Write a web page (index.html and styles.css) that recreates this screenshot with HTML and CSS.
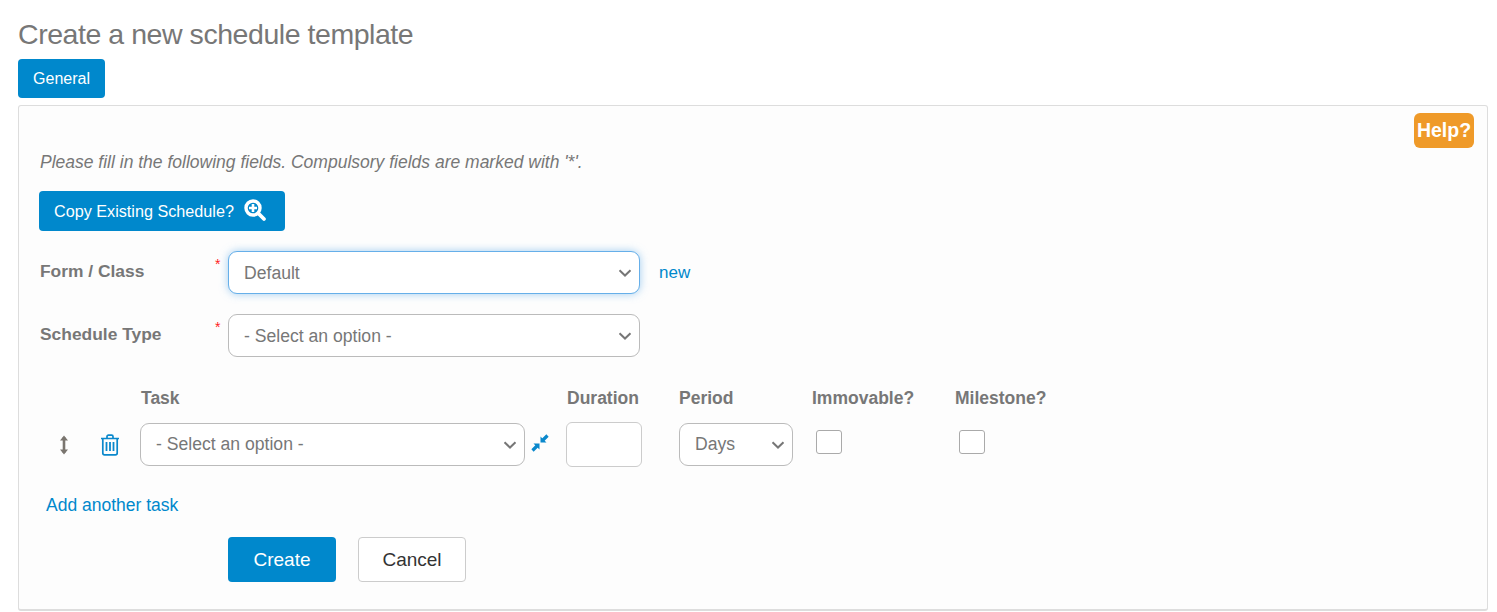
FILE: index.html
```html
<!DOCTYPE html>
<html lang="en">
<head>
<meta charset="utf-8">
<title>Create a new schedule template</title>
<link rel="stylesheet" href="styles.css">
</head>
<body>
<h1 class="title">Create a new schedule template</h1>
<div class="tabs"><a class="tab">General</a></div>
<main class="panel">
  <div class="help-row"><a class="help">Help?</a></div>
  <p class="intro">Please fill in the following fields. Compulsory fields are marked with '*'.</p>
  <button class="btn copy" type="button">Copy Existing Schedule?
    <svg class="copy-icon" viewBox="0 0 24 24" width="24" height="24" aria-hidden="true">
      <circle cx="10" cy="10" r="7" fill="none" stroke="#fff" stroke-width="3.400"/>
      <path d="M15.500 15.500L21 21" stroke="#fff" stroke-width="3.800" stroke-linecap="round"/>
      <path d="M10 6v8M6 10h8" stroke="#fff" stroke-width="2.600"/>
    </svg>
  </button>
  <div class="form-row first">
    <label class="form-label">Form / Class</label>
    <span class="req">*</span>
    <select class="select wide focus"><option>Default</option></select>
    <a class="link new">new</a>
  </div>
  <div class="form-row second">
    <label class="form-label">Schedule Type</label>
    <span class="req">*</span>
    <select class="select wide"><option>- Select an option -</option></select>
  </div>
  <div class="task-grid">
    <span></span>
    <span class="th">Task</span>
    <span></span>
    <span class="th">Duration</span>
    <span class="th">Period</span>
    <span class="th">Immovable?</span>
    <span class="th">Milestone?</span>
    <div class="row-tools">
      <svg class="move" viewBox="0 0 10 24" width="10" height="24" aria-hidden="true">
        <path d="M5 4v16" stroke="#7a756f" stroke-width="2.600"/>
        <path d="M1 7.500L5 2.500L9 7.500ZM1 16.500L5 21.500L9 16.500Z" fill="#7a756f"/>
      </svg>
      <svg class="trash" viewBox="0 0 20 22" width="20" height="22" aria-hidden="true">
        <path d="M1 4.500h18M7 4.500V2.600C7 1.800 7.600 1.200 8.400 1.200h3.200c.8 0 1.400.6 1.400 1.400v1.900" fill="none" stroke="#0a88cc" stroke-width="1.700"/>
        <path d="M2.800 4.500v14.600c0 1 .8 1.800 1.800 1.800h10.800c1 0 1.800-.8 1.800-1.800V4.500" fill="none" stroke="#0a88cc" stroke-width="1.700"/>
        <path d="M6.500 8v9M10 8v9M13.500 8v9" stroke="#0a88cc" stroke-width="1.800"/>
      </svg>
    </div>
    <select class="select task"><option>- Select an option -</option></select>
    <svg class="compress" viewBox="0 0 18 18" width="18" height="18" aria-hidden="true">
      <path d="M16.500 1.500L11.500 6.500M1.500 16.500l5-5" stroke="#0a88cc" stroke-width="3.200"/>
      <path d="M9.500 2.500V8.500H15.500ZM8.500 15.500V9.500H2.500Z" fill="#0a88cc"/>
    </svg>
    <input class="duration" type="text">
    <select class="select period"><option>Days</option></select>
    <input class="check" type="checkbox">
    <input class="check" type="checkbox">
  </div>
  <a class="link add">Add another task</a>
  <div class="actions">
    <button class="btn create" type="button">Create</button>
    <button class="cancel" type="button">Cancel</button>
  </div>
</main>
</body>
</html>
```
FILE: styles.css
```css
* { box-sizing: border-box; }
html, body { background: #fff; }
body {
  margin: 0;
  padding: 0 9px 0 18px;
  font-family: "Liberation Sans", Arial, sans-serif;
  color: #777;
  height: 612px;
  overflow: hidden;
}
.title {
  margin: 0;
  padding-top: 17px;
  font-size: 28.5px;
  line-height: 35px;
  font-weight: 400;
  letter-spacing: -0.45px;
  color: #777;
}
.tabs { margin-top: 7px; height: 39px; }
.tab {
  display: inline-block;
  width: 87px;
  height: 39px;
  line-height: 39px;
  text-align: center;
  background: #0088cc;
  color: #fff;
  font-size: 16px;
  border-radius: 4px;
}
.panel {
  margin-top: 7px;
  height: 506px;
  background: #fdfdfd;
  border: 1px solid #ddd;
  border-bottom-width: 2px;
  border-radius: 3px;
  padding: 7px 13px 0 20px;
}
.help-row { display: flex; justify-content: flex-end; height: 35px; }
.help {
  width: 60px;
  height: 35px;
  line-height: 35px;
  text-align: center;
  background: #ef9a29;
  color: #fff;
  font-weight: 700;
  font-size: 19.5px;
  border-radius: 6px;
}
.intro {
  margin: 4px 0 0 1px;
  font-style: italic;
  font-size: 17.5px;
  line-height: 20px;
  color: #777;
}
.btn {
  background: #0088cc;
  color: #fff;
  border: 0;
  border-radius: 4px;
  font-family: inherit;
}
.copy {
  display: flex;
  align-items: center;
  margin-top: 19px;
  width: 246px;
  height: 40px;
  padding: 1px 0 0 15px;
  font-size: 16.2px;
  gap: 9px;
}
.copy-icon { flex: none; margin-top: -4px; }
.form-row { display: flex; align-items: flex-start; padding-left: 1px; }
.first { margin-top: 20px; }
.second { margin-top: 20px; }
.form-label {
  width: 175px;
  font-weight: 700;
  font-size: 17.4px;
  line-height: 20px;
  margin-top: 10px;
  color: #777;
}
.req {
  width: 13px;
  color: #f22;
  font-size: 14px;
  line-height: 14px;
  margin-top: 6px;
}
.select {
  appearance: none;
  -webkit-appearance: none;
  height: 43px;
  background: #fff url("data:image/svg+xml,%3Csvg xmlns='http://www.w3.org/2000/svg' width='14' height='8' viewBox='0 0 14 8'%3E%3Cpath d='M1.500 1.200L7 6.500L12.500 1.200' fill='none' stroke='%23777' stroke-width='2'/%3E%3C/svg%3E") no-repeat right 7px center;
  border: 1px solid #bbb;
  border-radius: 9px;
  padding: 0 24px 0 15px;
  font-family: inherit;
  font-size: 17.6px;
  color: #777;
}
.wide { width: 412px; }
.focus {
  border-color: #66afe9;
  box-shadow: 0 0 8px rgba(102, 175, 233, 0.6);
}
.link { color: #0088cc; }
.new { margin: 12px 0 0 19px; font-size: 17px; line-height: 20px; }
.task-grid {
  display: grid;
  grid-template-columns: 100px 385px 41px 113px 133px 143px 1fr;
  grid-template-rows: 20px auto;
  row-gap: 14px;
  align-items: center;
  margin-top: 31px;
  padding-left: 1px;
}
.th { font-weight: 700; font-size: 17.5px; line-height: 20px; color: #777; }
.th:nth-child(2) { padding-left: 1px; }
.th:nth-child(4) { padding-left: 1px; }
.row-tools { display: flex; align-items: center; padding-left: 19px; gap: 31px; }
.task { width: 385px; padding-bottom: 2px; }
.compress { margin-left: 6px; margin-top: -3px; }
.duration {
  width: 76px;
  height: 45px;
  background: #fff;
  border: 1px solid #ccc;
  border-radius: 6px;
}
.period { width: 114px; padding-bottom: 2px; }
.check {
  appearance: none;
  -webkit-appearance: none;
  margin: 0 0 5px 4px;
  width: 25.5px;
  height: 24px;
  background: #fff;
  border: 1px solid #aaa;
  border-radius: 3px;
}
.add { display: block; margin: 27px 0 0 7px; font-size: 17.5px; line-height: 22px; }
.actions { display: flex; gap: 22px; margin-top: 21px; padding-left: 189px; }
.create { width: 108px; height: 45px; font-size: 19px; }
.cancel {
  width: 108px;
  height: 45px;
  background: #fff;
  border: 1px solid #ccc;
  border-radius: 4px;
  font-family: inherit;
  font-size: 19px;
  color: #333;
}
```
